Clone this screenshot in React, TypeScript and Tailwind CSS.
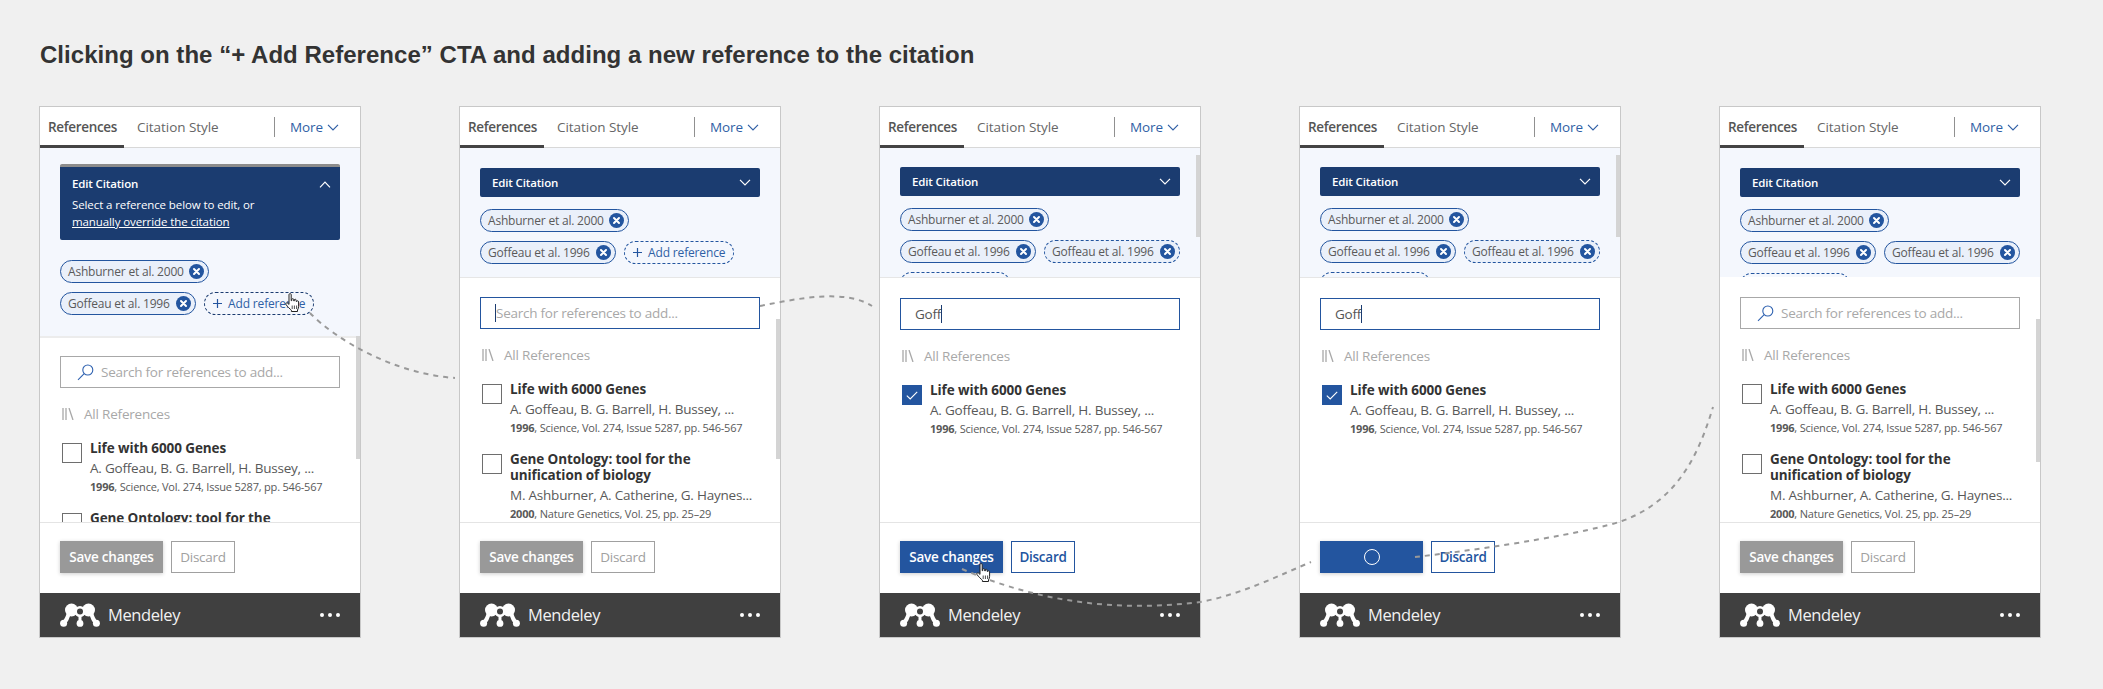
import type { ReactNode } from "react";

const font = { fontFamily: '"Open Sans", sans-serif' };

function Chevron({ up, className }: { up?: boolean; className?: string }) {
  return (
    <svg width="12" height="7" viewBox="0 0 12 7" fill="none" stroke="currentColor" strokeWidth="1.2" className={className}>
      <path d={up ? "M1 6.3 6 1.2l5 5.1" : "M1 .8 6 5.9l5-5.1"} />
    </svg>
  );
}

function CloseDot() {
  return (
    <svg width="15" height="15" viewBox="0 0 15 15" className="shrink-0">
      <circle cx="7.5" cy="7.5" r="7.500" fill="#23559f" />
      <path d="M5 5l5 5M10 5l-5 5" stroke="#fff" strokeWidth="2" strokeLinecap="round" />
    </svg>
  );
}

function Chip({ label, width, dashed }: { label: string; width: string; dashed?: boolean }) {
  return (
    <div
      className={`flex h-[23px] shrink-0 items-center justify-between rounded-full border-[1.5px] border-[#23559f] bg-[#eaf0fa] pl-[7px] pr-[4px] text-[12px] tracking-[-0.2px] text-[#5a5a5a] ${width} ${dashed ? "border-dashed" : ""}`}
    >
      <span>{label}</span>
      <CloseDot />
    </div>
  );
}

function AddChip({ navy }: { navy?: boolean }) {
  return (
    <div
      className={`flex h-[23px] w-[110px] shrink-0 items-center gap-[6px] rounded-full border-[1.5px] border-dashed pl-[8px] text-[12px] tracking-[-0.15px] text-[#2f5fa5] ${navy ? "border-[#1b3c70]" : "border-[#23559f]"}`}
    >
      <svg width="9" height="9" viewBox="0 0 9 9" stroke="#23559f" strokeWidth="1.2">
        <path d="M4.5 0v9M0 4.5h9" />
      </svg>
      <span className="whitespace-nowrap">Add reference</span>
    </div>
  );
}

function SearchGlass() {
  return (
    <svg width="17" height="17" viewBox="0 0 17 17" fill="none" stroke="#2f62b0" strokeWidth="1.1" className="shrink-0">
      <circle cx="10.8" cy="6" r="5" />
      <path d="M7.2 9.6 1 15.8" />
    </svg>
  );
}

function LibraryIcon() {
  return (
    <svg width="12" height="12" viewBox="0 0 12 12" stroke="#a8a8a8" strokeWidth="1.3" className="shrink-0">
      <path d="M1 0v12M4 0v12M7 0l4 12" />
    </svg>
  );
}

function Checkbox({ checked }: { checked?: boolean }) {
  if (checked) {
    return (
      <div className="mt-[3px] flex h-[20px] w-[20px] shrink-0 items-center justify-center bg-[#23559f]">
        <svg width="12" height="9" viewBox="0 0 12 9" fill="none" stroke="#fff" strokeWidth="1.1">
          <path d="M.8 4.6 4.2 8 11.200.8" />
        </svg>
      </div>
    );
  }
  return <div className="mt-[3px] h-[20px] w-[20px] shrink-0 border border-[#6e6e6e] bg-white" />;
}

function RefItem({ title, authors, year, meta, checked }: { title: ReactNode; authors: string; year: string; meta: string; checked?: boolean }) {
  return (
    <div className="mb-[14px] ml-[2px] flex gap-[8px]">
      <Checkbox checked={checked} />
      <div className="min-w-0">
        <div className="text-[13.5px] font-bold leading-[16px] tracking-[-0.1px] text-[#333]">{title}</div>
        <div className="mt-[2px] whitespace-nowrap text-[13.5px] leading-[20px] tracking-[-0.22px] text-[#595959]">{authors}</div>
        <div className="whitespace-nowrap text-[11px] leading-[18px] tracking-[-0.2px] text-[#595959]">
          <span className="font-bold">{year}</span>
          {meta}
        </div>
      </div>
    </div>
  );
}

function MendeleyLogo() {
  return (
    <svg width="40" height="24" viewBox="0 0 40 24" fill="#fff" className="shrink-0">
      <circle cx="11.500" cy="7" r="6.500" />
      <circle cx="28.500" cy="7" r="6.500" />
      <circle cx="20" cy="8.500" r="5.500" />
      <circle cx="3.600" cy="20.200" r="3.500" />
      <circle cx="20" cy="20.400" r="3.400" />
      <circle cx="36.400" cy="20.200" r="3.500" />
      <path d="M3.600 20.200C7 17 8 14 9 9M36.400 20.200C33 17 32 14 31 9" stroke="#fff" strokeWidth="4" fill="none" />
      <path d="M20 20V12" stroke="#fff" strokeWidth="3" fill="none" />
      <circle cx="20" cy="8.500" r="3" fill="#404040" />
    </svg>
  );
}

function Hand() {
  return (
    <svg width="17" height="20" viewBox="0 0 17 20" fill="#fff" stroke="#222" strokeWidth="1" strokeLinejoin="round">
      <path d="M4 1.600c0-1.300 2.200-1.300 2.200 0v6.100l.6-.1V6.400c0-1 1.900-1 1.900.1v1.300l.6.100V7c0-1 1.800-1 1.800.1v1.200l.6.200c0-1 1.900-.9 1.900.3v4.500c0 1.600-.5 2.700-1.100 3.700v1.500H6.400v-1.300C5 16 2.600 13.800 1 11.500c-.8-1.200.6-2.300 1.700-1.300L4 11.400Z" />
      <path d="M7.200 12.500v3.500M9.400 12.500v3.500M11.600 12.500v3.500" fill="none" strokeWidth=".8" />
    </svg>
  );
}

type PanelProps = {
  expanded?: boolean;
  blueClass: string;
  chips: ReactNode;
  searchClass: string;
  searchFocused?: boolean;
  searchValue?: string;
  filtered?: boolean;
  scrollClass: string;
  saveState?: "disabled" | "active" | "busy";
};

function Panel({ expanded, blueClass, chips, searchClass, searchFocused, searchValue, filtered, scrollClass, saveState = "disabled" }: PanelProps) {
  return (
    <div className="relative flex h-[532px] w-[322px] shrink-0 flex-col border border-[#c8c8c8] bg-white" style={font}>
      {/* Tabs */}
      <div className="flex h-[41px] shrink-0 items-start border-b border-[#d8d8d8] text-[13.5px]">
        <div className="flex h-[41px] w-[84px] items-center justify-center border-b-[3px] border-[#444] pl-[1px] pt-[3px] font-semibold tracking-[-0.35px] text-[#555]">References</div>
        <div className="ml-[13px] flex h-[40px] items-center whitespace-nowrap tracking-[-0.05px] text-[#666]">Citation Style</div>
        <div className="ml-auto mr-[15px] mt-[10px] h-[20px] w-px bg-[#909090]" />
        <div className="mr-[21px] flex h-[40px] items-center gap-[4px] tracking-[-0.1px] text-[#2f5fa5]">
          More
          <Chevron />
        </div>
      </div>

      {/* Citation block */}
      <div className={`shrink-0 overflow-hidden bg-[#f4f7fd] px-[20px] ${blueClass}`}>
        {expanded ? (
          <div className="h-[76px] rounded-[2px] border-t-[3px] border-[#8c8c8c] bg-[#1b3c70] px-[12px] text-white">
            <div className="mt-[8px] flex items-center justify-between text-[11.5px] font-semibold leading-[18px] tracking-[-0.15px]">
              Edit Citation
              <Chevron up className="mr-[-3px]" />
            </div>
            <div className="mt-[3px] text-[11.5px] leading-[17px] tracking-[-0.1px]">
              Select a reference below to edit, or
              <br />
              <span className="underline">manually override the citation</span>
            </div>
          </div>
        ) : (
          <div className="flex h-[29px] items-center justify-between rounded-[2px] bg-[#1b3c70] px-[12px] text-[11.5px] font-semibold tracking-[-0.15px] text-white">
            Edit Citation
            <Chevron className="mr-[-3px]" />
          </div>
        )}
        <div className={`flex flex-wrap gap-x-[8px] gap-y-[9px] ${expanded ? "mt-[20px]" : "mt-[12px]"}`}>{chips}</div>
      </div>

      {/* Search and list */}
      <div className="min-h-0 flex-1 overflow-hidden px-[20px]">
        <div
          className={`flex h-[32px] items-center text-[13.5px] tracking-[-0.25px] ${searchClass} ${searchFocused ? "border-[1.5px] border-[#23559f] pl-[14px]" : "border-[1.5px] border-[#a8a8a8] pl-[16px]"}`}
        >
          {searchValue ? (
            <>
              <span className="text-[#555]">{searchValue}</span>
              <span className="h-[18px] w-px bg-[#1b3c70]" />
            </>
          ) : searchFocused ? (
            <>
              <span className="h-[18px] w-px bg-[#1b3c70]" />
              <span className="text-[#a8a8a8]">Search for references to add...</span>
            </>
          ) : (
            <>
              <SearchGlass />
              <span className="ml-[7px] text-[#a8a8a8]">Search for references to add...</span>
            </>
          )}
        </div>
        <div className="mt-[16px] flex h-[20px] items-center gap-[10px] pl-[2px] text-[13.5px] tracking-[-0.2px] text-[#a8a8a8]">
          <LibraryIcon />
          All References
        </div>
        <div className="mt-[16px]">
          <RefItem
            title="Life with 6000 Genes"
            authors="A. Goffeau, B. G. Barrell, H. Bussey, ..."
            year="1996"
            meta=", Science, Vol. 274, Issue 5287, pp. 546-567"
            checked={filtered}
          />
          {!filtered && (
            <RefItem
              title={
                <>
                  Gene Ontology: tool for the
                  <br />
                  unification of biology
                </>
              }
              authors="M. Ashburner, A. Catherine, G. Haynes..."
              year="2000"
              meta=", Nature Genetics, Vol. 25, pp. 25–29"
            />
          )}
        </div>
      </div>

      {/* Actions */}
      <div className="flex h-[71px] shrink-0 items-center gap-[8px] border-t border-[#e4e4e4] px-[20px] pb-[2px] text-[13.5px] tracking-[-0.25px]">
        <div
          className={`flex h-[32px] w-[103px] items-center justify-center font-semibold text-white shadow-[0_1px_4px_rgba(0,0,0,0.2)] ${saveState === "disabled" ? "bg-[#999]" : "bg-[#23559f]"}`}
        >
          {saveState === "busy" ? <span className="h-[16px] w-[16px] rounded-full border border-white" /> : "Save changes"}
        </div>
        <div
          className={`flex h-[32px] w-[64px] items-center justify-center border-[1.5px] bg-white ${saveState === "disabled" ? "border-[#a0a0a0] text-[#a0a0a0]" : "border-[#23559f] font-semibold text-[#23559f]"}`}
        >
          Discard
        </div>
      </div>

      {/* Brand bar */}
      <div className="flex h-[44px] shrink-0 items-center bg-[#404040] px-[20px] text-white">
        <MendeleyLogo />
        <span className="ml-[8px] mt-[1px] text-[16.5px] tracking-[-0.4px] text-[#f2f2f2]">Mendeley</span>
        <div className="ml-auto flex gap-[4px]">
          <span className="h-[4px] w-[4px] rounded-full bg-white" />
          <span className="h-[4px] w-[4px] rounded-full bg-white" />
          <span className="h-[4px] w-[4px] rounded-full bg-white" />
        </div>
      </div>

      {/* Scrollbar */}
      <div className={`absolute right-0 w-[4px] bg-[#d4d4d4] ${scrollClass}`} />
    </div>
  );
}

export default function App() {
  const ash = <Chip label="Ashburner et al. 2000" width="w-[149px]" />;
  const gof = <Chip label="Goffeau et al. 1996" width="w-[136px]" />;
  const ghost = <div className="h-[23px] w-[110px] shrink-0 rounded-full border-[1.5px] border-dashed border-[#23559f]" />;

  return (
    <div className="relative h-[689px] w-[2103px] overflow-hidden bg-[#f0f0f0]">
      <h1 className="pl-[40px] pt-[41px] text-[24px] font-bold leading-[28px] tracking-[0.03px] text-[#333]" style={{ fontFamily: '"Liberation Sans", Arial, sans-serif' }}>
        Clicking on the “+ Add Reference” CTA and adding a new reference to the citation
      </h1>

      <div className="mt-[37px] flex gap-[98px] pl-[39px]">
        <Panel
          expanded
          blueClass="h-[190px] pt-[16px] border-b-2 border-[#ececec]"
          chips={
            <>
              {ash}
              {gof}
              <AddChip navy />
            </>
          }
          searchClass="mt-[18px]"
          scrollClass="top-[229px] h-[123px]"
        />
        <Panel
          blueClass="h-[130px] pt-[20px] border-b border-[#e6e6e6]"
          chips={
            <>
              {ash}
              {gof}
              <AddChip />
            </>
          }
          searchClass="mt-[19px]"
          searchFocused
          scrollClass="top-[212px] h-[140px]"
        />
        <Panel
          blueClass="h-[130px] pt-[19px] border-b border-[#e6e6e6]"
          chips={
            <>
              {ash}
              {gof}
              <Chip label="Goffeau et al. 1996" width="w-[136px]" dashed />
              {ghost}
            </>
          }
          searchClass="mt-[20px]"
          searchFocused
          searchValue="Goff"
          filtered
          scrollClass="top-[48px] h-[82px]"
          saveState="active"
        />
        <Panel
          blueClass="h-[130px] pt-[19px] border-b border-[#e6e6e6]"
          chips={
            <>
              {ash}
              {gof}
              <Chip label="Goffeau et al. 1996" width="w-[136px]" dashed />
              {ghost}
            </>
          }
          searchClass="mt-[20px]"
          searchFocused
          searchValue="Goff"
          filtered
          scrollClass="top-[48px] h-[82px]"
          saveState="busy"
        />
        <Panel
          blueClass="h-[129px] pt-[20px]"
          chips={
            <>
              {ash}
              {gof}
              {gof}
              {ghost}
            </>
          }
          searchClass="mt-[20px]"
          scrollClass="top-[212px] h-[143px]"
        />
      </div>

      {/* Flow connectors */}
      <svg width="2103" height="689" viewBox="0 0 2103 689" fill="none" stroke="#999" strokeWidth="2" strokeDasharray="5 5" className="pointer-events-none absolute left-0 top-0">
        <path d="M310 313C336 340 395 374 455 378" />
        <path d="M760 306C800 298 845 289 872 306" />
        <path d="M962 569C1040 603 1120 612 1200 602C1240 595 1280 575 1311 562" />
        <path d="M1415 557C1495 548 1590 532 1622 521C1680 500 1700 450 1713 407" />
      </svg>

      {/* Pointer cursors */}
      <div className="absolute left-[285px] top-[293px]">
        <Hand />
      </div>
      <div className="absolute left-[976px] top-[563px]">
        <Hand />
      </div>
    </div>
  );
}
